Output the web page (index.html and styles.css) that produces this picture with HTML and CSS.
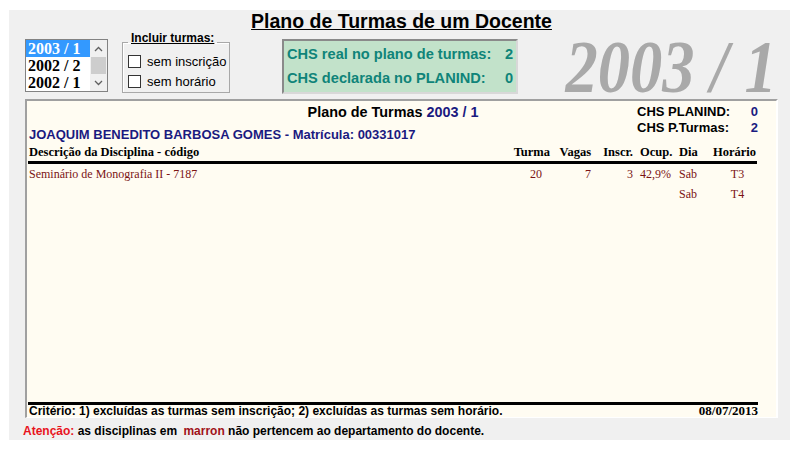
FILE: index.html
```html
<!DOCTYPE html>
<html lang="pt">
<head>
<meta charset="utf-8">
<title>Plano de Turmas de um Docente</title>
<link rel="stylesheet" href="styles.css">
</head>
<body>
<div class="window">
  <h1 class="title">Plano de Turmas de um Docente</h1>
  <div class="controls">
    <div class="listbox">
      <ul class="list-items">
        <li class="selected">2003 / 1</li>
        <li>2002 / 2</li>
        <li>2002 / 1</li>
      </ul>
      <div class="scrollbar">
        <span class="arrow">
          <svg width="9" height="6" viewBox="0 0 9 6"><path d="M1 5 L4.5 1.5 L8 5" fill="none" stroke="#606060" stroke-width="1.3"/></svg>
        </span>
        <span class="thumb"></span>
        <span class="arrow">
          <svg width="9" height="6" viewBox="0 0 9 6"><path d="M1 1 L4.5 4.5 L8 1" fill="none" stroke="#606060" stroke-width="1.3"/></svg>
        </span>
      </div>
    </div>
    <fieldset class="filters">
      <legend class="filters-legend">Incluir turmas:</legend>
      <label class="check first-check"><span class="box"></span>sem inscrição</label>
      <label class="check"><span class="box"></span>sem horário</label>
    </fieldset>
    <div class="chs-box">
      <div class="chs-row"><span>CHS real no plano de turmas:</span><span>2</span></div>
      <div class="chs-row"><span>CHS declarada no PLANIND:</span><span>0</span></div>
    </div>
    <div class="big-year"><span class="big-year-text">2003 / 1</span></div>
  </div>

  <div class="report">
    <div class="report-head">
      <div class="head-title">Plano de Turmas <span class="navy">2003 / 1</span></div>
      <div class="head-chs">
        <div class="chs-line"><span>CHS PLANIND:</span><span class="navy">0</span></div>
        <div class="chs-line"><span>CHS P.Turmas:</span><span class="navy">2</span></div>
      </div>
      <div class="head-name">JOAQUIM BENEDITO BARBOSA GOMES - Matrícula: 00331017</div>
    </div>
    <table class="grid">
      <thead>
        <tr>
          <th class="c-desc">Descrição da Disciplina - código</th>
          <th class="c-turma">Turma</th>
          <th class="c-vagas">Vagas</th>
          <th class="c-inscr">Inscr.</th>
          <th class="c-ocup">Ocup.</th>
          <th class="c-dia">Dia</th>
          <th class="c-hor">Horário</th>
        </tr>
      </thead>
      <tbody>
        <tr>
          <td class="c-desc">Seminário de Monografia II - 7187</td>
          <td class="c-turma v-turma">20</td>
          <td class="c-vagas">7</td>
          <td class="c-inscr">3</td>
          <td class="c-ocup">42,9%</td>
          <td class="c-dia">Sab</td>
          <td class="c-hor v-hor">T3</td>
        </tr>
        <tr>
          <td class="c-desc"></td>
          <td class="c-turma"></td>
          <td class="c-vagas"></td>
          <td class="c-inscr"></td>
          <td class="c-ocup"></td>
          <td class="c-dia">Sab</td>
          <td class="c-hor v-hor">T4</td>
        </tr>
      </tbody>
    </table>
    <div class="report-foot">
      <span>Critério: 1) excluídas as turmas sem inscrição; 2) excluídas as turmas sem horário.</span>
      <span class="date">08/07/2013</span>
    </div>
  </div>

  <p class="note"><span class="red">Atenção:</span> as disciplinas em <span class="maroon">marron</span> não pertencem ao departamento do docente.</p>
</div>
</body>
</html>
```

FILE: styles.css
```css
html, body {
  margin: 0;
  padding: 0;
  background: #ffffff;
}

body {
  font-family: "Liberation Sans", Arial, sans-serif;
  color: #000;
}

.window {
  margin: 10px 0 0 9px;
  width: 781px;
  height: 430px;
  box-sizing: border-box;
  padding: 0 12px 0 16px;
  background: #f0f0f0;
  display: flex;
  flex-direction: column;
}

.title {
  margin: 0;
  font-size: 19.5px;
  line-height: 22px;
  font-weight: bold;
  text-decoration: underline;
  text-align: center;
}

/* ---------- top controls ---------- */
.controls {
  display: flex;
  align-items: flex-start;
  height: 64px;
}

.listbox {
  margin-top: 7px;
  width: 83px;
  height: 53px;
  box-sizing: border-box;
  border: 1px solid #828282;
  background: #fff;
  display: flex;
}

.list-items {
  list-style: none;
  margin: 0;
  padding: 0;
  flex: 1;
  font-family: "Liberation Serif", "Times New Roman", serif;
  font-weight: bold;
  font-size: 16px;
  line-height: 17px;
}

.list-items li {
  padding-left: 2px;
  height: 17px;
  white-space: nowrap;
}

.list-items .selected {
  background: #3399ff;
  color: #fff;
}

.scrollbar {
  width: 17px;
  background: #f0f0f0;
  display: flex;
  flex-direction: column;
}

.arrow {
  height: 17px;
  display: flex;
  align-items: center;
  justify-content: center;
}

.thumb {
  height: 17px;
  margin: 0 1px;
  background: #cdcdcd;
}

.filters {
  margin: 0 0 0 14px;
  width: 108px;
  height: 61px;
  box-sizing: border-box;
  padding: 0 0 0 5px;
  border: 1px solid #a8a8a8;
  box-shadow: inset 1px 1px 0 #fff;
  display: flex;
  flex-direction: column;
  gap: 7px;
}

.filters-legend {
  padding: 0 3px 9px 3px;
  font-size: 12px;
  line-height: 12px;
  font-weight: bold;
  text-decoration: underline;
}

.check {
  display: flex;
  align-items: center;
  gap: 6px;
  font-size: 13px;
  line-height: 13px;
  height: 13px;
  white-space: nowrap;
}

.first-check {
  margin-top: 2px;
}

.box {
  width: 11px;
  height: 11px;
  border: 1px solid #333;
  background: #fff;
  flex: none;
}

.chs-box {
  margin: 7px 0 0 52px;
  width: 236px;
  height: 55px;
  box-sizing: border-box;
  border: 2px solid;
  border-color: #8a8a8a #d8d8d8 #d8d8d8 #8a8a8a;
  background: #c2e2ca;
  padding: 1px 3px 0 3px;
  color: #0f8479;
  font-weight: bold;
  font-size: 14.6px;
  line-height: 24px;
}

.chs-row {
  display: flex;
  justify-content: space-between;
  white-space: nowrap;
}

.big-year {
  margin-left: auto;
  margin-right: 1px;
  margin-top: 6px;
  height: 58px;
  color: #a9a9a9;
  font-family: "Liberation Serif", "Times New Roman", serif;
  font-weight: bold;
  font-style: italic;
  font-size: 75px;
  line-height: 58px;
  white-space: nowrap;
}

.big-year-text {
  display: inline-block;
  transform: scaleX(0.86);
  transform-origin: right center;
}

/* ---------- report ---------- */
.report {
  margin-top: 3px;
  width: 753px;
  height: 319px;
  box-sizing: border-box;
  border-style: solid;
  border-width: 2px 2px 1px 2px;
  border-color: #a0a0a0 #ffffff #ffffff #a0a0a0;
  background: #fffcf2;
  padding: 3px 18px 0 1px;
  display: flex;
  flex-direction: column;
}

.navy {
  color: #1a1a80;
}

.report-head {
  display: grid;
  grid-template-columns: minmax(0, 1fr) auto minmax(0, 1fr);
  font-weight: bold;
}

.head-title {
  grid-column: 2;
  grid-row: 1;
  font-size: 14.4px;
  line-height: 16px;
  white-space: nowrap;
}

.head-chs {
  grid-column: 3;
  grid-row: 1 / span 2;
  justify-self: end;
  align-self: start;
  width: 121px;
  font-size: 13px;
  line-height: 15px;
}

.chs-line {
  display: flex;
  justify-content: space-between;
  white-space: nowrap;
}

.chs-line + .chs-line {
  margin-top: 1px;
}

.head-name {
  grid-column: 1 / span 2;
  grid-row: 2;
  margin-top: 6px;
  padding-left: 1px;
  color: #1a1a80;
  font-size: 13px;
  line-height: 17px;
  white-space: nowrap;
}

.grid {
  width: 729px;
  border-collapse: collapse;
  table-layout: fixed;
  font-family: "Liberation Serif", "Times New Roman", serif;
  margin-bottom: auto;
}

.grid th,
.grid td {
  box-sizing: border-box;
  padding: 0;
  white-space: nowrap;
  overflow: visible;
}

.grid th {
  font-size: 12.5px;
  line-height: 16px;
  padding-top: 1px;
  padding-bottom: 1px;
  font-weight: bold;
  border-bottom: 3px solid #000;
}

.grid td {
  font-size: 12px;
  line-height: 20px;
  height: 20px;
  color: #7b1414;
}

.c-desc { width: 482px; text-align: left; }
.c-turma { width: 42px; text-align: right; }
.c-vagas { width: 41px; text-align: right; }
.c-inscr { width: 42px; text-align: right; }
.c-ocup { width: 41px; text-align: left; }
.c-dia { width: 34px; text-align: left; }
.c-hor { width: 47px; text-align: right; }

.grid .c-desc { padding-left: 1px; }
.grid th.c-turma, .grid th.c-vagas, .grid th.c-inscr { padding-right: 2px; }
.grid td.c-vagas, .grid td.c-inscr { padding-right: 2px; }
.grid td.v-turma { padding-right: 10px; }
.grid .c-ocup { padding-left: 5px; }
.grid .c-dia { padding-left: 3px; }
.grid th.c-hor { padding-right: 1px; }
.grid td.v-hor { text-align: center; padding-left: 8px; }

.report-foot {
  border-top: 3px solid #000;
  display: flex;
  justify-content: space-between;
  align-items: baseline;
  font-weight: bold;
  font-size: 12px;
  line-height: 12px;
  padding-left: 1px;
  white-space: nowrap;
}

.date {
  font-family: "Liberation Serif", "Times New Roman", serif;
  font-size: 13px;
}

.note {
  margin: 6px 0 0 -2px;
  font-weight: bold;
  font-size: 12px;
  line-height: 14px;
  white-space: nowrap;
}

.red {
  color: #e8141e;
}

.maroon {
  color: #a01218;
  margin-left: 3px;
}
```
